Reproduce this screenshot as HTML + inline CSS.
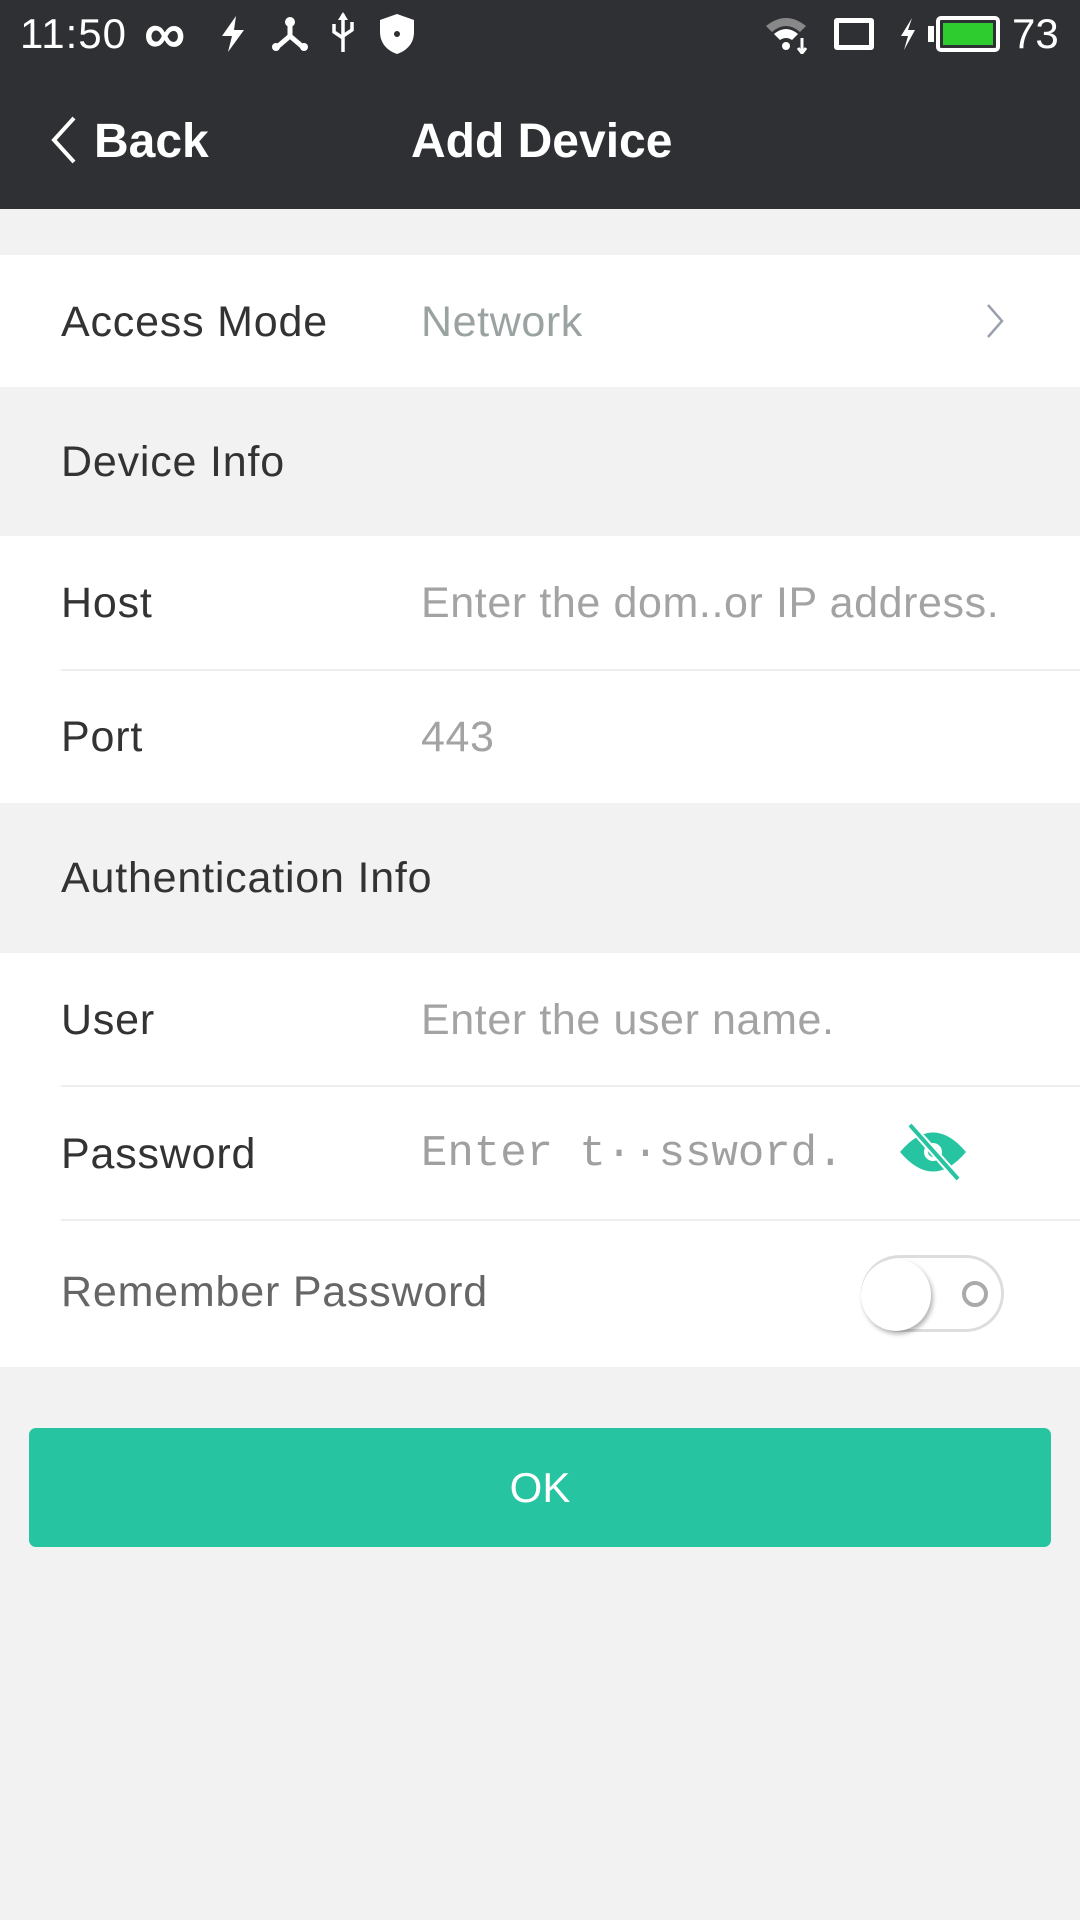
<!DOCTYPE html>
<html><head><meta charset="utf-8"><style>
*{margin:0;padding:0;box-sizing:border-box}
body{width:1080px;height:1920px;background:#f2f2f2;font-family:"Liberation Sans",sans-serif;position:relative;overflow:hidden}
.top{position:absolute;left:0;top:0;width:1080px;height:209px;background:#2f3033;color:#fff}
.abs{position:absolute}
.row{position:absolute;left:0;width:1080px;background:#fff}
.lbl{position:absolute;left:61px;font-size:43px;color:#333;letter-spacing:0.8px}
.val{position:absolute;left:421px;font-size:43px;color:#a3a3a3;letter-spacing:0.6px}
.sec{position:absolute;left:61px;font-size:43px;color:#333;letter-spacing:0.8px}
.div{position:absolute;left:61px;right:0;height:2px;background:#eeeeee}
</style></head><body>
<div class="top">
 <div class="abs" style="left:20px;top:10px;font-size:42px;letter-spacing:1px">11:50</div>
 <div class="abs" style="left:144px;top:0px;font-size:58px;font-weight:bold">∞</div>
 <svg class="abs" style="left:218px;top:16px" width="30" height="36" viewBox="0 0 30 36"><path d="M18 0 L4 20 H14 L10 36 L26 14 H16 Z" fill="#fff"/></svg>
 <svg class="abs" style="left:270px;top:16px" width="40" height="36" viewBox="0 0 40 36"><circle cx="20" cy="6" r="5" fill="#fff"/><path d="M20 8 V20 L6 32 M20 20 L34 32" stroke="#fff" stroke-width="5" fill="none"/><circle cx="6" cy="31" r="4" fill="#fff"/><circle cx="34" cy="31" r="4" fill="#fff"/></svg>
 <svg class="abs" style="left:330px;top:12px" width="26" height="42" viewBox="0 0 26 42"><path d="M13 2 V40 M4 12 V20 L13 26 M22 10 V18 L13 24" stroke="#fff" stroke-width="3.5" fill="none"/><path d="M13 0 L8 8 H18Z" fill="#fff"/></svg>
 <svg class="abs" style="left:380px;top:14px" width="34" height="40" viewBox="0 0 34 40"><path d="M17 0 L34 6 V18 C34 30 26 37 17 40 C8 37 0 30 0 18 V6 Z" fill="#fff"/><circle cx="17" cy="20" r="3" fill="#2f3033"/></svg>
 <svg class="abs" style="left:764px;top:14px" width="48" height="40" viewBox="0 0 48 40"><path d="M2 12 Q22 -4 42 12 L36 18 Q22 6 8 18Z" fill="#888"/><path d="M10 20 Q22 10 34 20 L28 26 Q22 22 16 26Z" fill="#fff"/><circle cx="22" cy="32" r="4" fill="#fff"/><path d="M38 24 V38 M34 34 L38 39 L42 34" stroke="#fff" stroke-width="3" fill="none"/></svg>
 <div class="abs" style="left:834px;top:18px;width:40px;height:32px;border:5px solid #fff;border-radius:3px"></div>
 <svg class="abs" style="left:898px;top:18px" width="20" height="32" viewBox="0 0 20 32"><path d="M14 0 L3 18 H10 L6 32 L17 12 H10Z" fill="#fff"/></svg>
 <div class="abs" style="left:936px;top:16px;width:64px;height:36px;border:4px solid #fff;border-radius:5px;padding:3px"><div style="width:100%;height:100%;background:#2fcc2f"></div></div>
 <div class="abs" style="left:928px;top:26px;width:6px;height:16px;background:#fff"></div>
 <div class="abs" style="left:1012px;top:10px;font-size:42px">73</div>
 <svg class="abs" style="left:50px;top:116px" width="30" height="48" viewBox="0 0 30 48"><path d="M24 2 L4 24 L24 46" stroke="#fff" stroke-width="4" fill="none"/></svg>
 <div class="abs" style="left:94px;top:114px;font-size:48px;font-weight:bold">Back</div>
 <div class="abs" style="left:411px;top:114px;font-size:48px;font-weight:bold">Add Device</div>
</div>

<div class="row" style="top:255px;height:132px">
 <div class="lbl" style="top:43px">Access Mode</div>
 <div class="val" style="top:43px;color:#9aa2a2">Network</div>
 <svg class="abs" style="left:984px;top:48px" width="22" height="36" viewBox="0 0 22 36"><path d="M4 2 L18 18 L4 34" stroke="#9aa0ac" stroke-width="2.5" fill="none"/></svg>
</div>
<div class="sec" style="top:438px">Device Info</div>
<div class="row" style="top:536px;height:267px">
 <div class="lbl" style="top:43px">Host</div>
 <div class="val" style="top:43px">Enter the dom..or IP address.</div>
 <div class="div" style="top:133px"></div>
 <div class="lbl" style="top:177px">Port</div>
 <div class="val" style="top:177px">443</div>
</div>
<div class="sec" style="top:854px">Authentication Info</div>
<div class="row" style="top:953px;height:414px">
 <div class="lbl" style="top:43px">User</div>
 <div class="val" style="top:43px">Enter the user name.</div>
 <div class="div" style="top:132px"></div>
 <div class="lbl" style="top:177px">Password</div>
 <div class="val" style="top:176px;font-family:'Liberation Mono',monospace;font-size:44px;color:#a0a0a0;letter-spacing:0">Enter t··ssword.</div>
 <svg class="abs" style="left:898px;top:170px" width="70" height="58" viewBox="0 0 70 58"><path d="M2 29 Q35 -10 68 29 Q35 68 2 29Z" fill="#26c4a0"/><circle cx="35" cy="29" r="7" fill="none" stroke="#fff" stroke-width="4"/><path d="M12 2 L60 56" stroke="#fff" stroke-width="8"/><path d="M12 2 L60 56" stroke="#26c4a0" stroke-width="4"/></svg>
 <div class="div" style="top:266px"></div>
 <div class="lbl" style="top:315px;color:#666">Remember Password</div>
 <div class="abs" style="left:861px;top:302px;width:143px;height:77px;border:3px solid #ddd;border-radius:40px;background:#fff"></div>
 <div class="abs" style="left:962px;top:328px;width:26px;height:26px;border:4px solid #aaa;border-radius:50%"></div>
 <div class="abs" style="left:861px;top:306px;width:70px;height:72px;border-radius:50%;background:#fff;box-shadow:2px 3px 5px rgba(0,0,0,.3)"></div>
</div>
<div class="abs" style="left:29px;top:1428px;width:1022px;height:119px;background:#26c4a0;border-radius:7px;color:#fff;font-size:42px;text-align:center;line-height:119px">OK</div>
</body></html>
